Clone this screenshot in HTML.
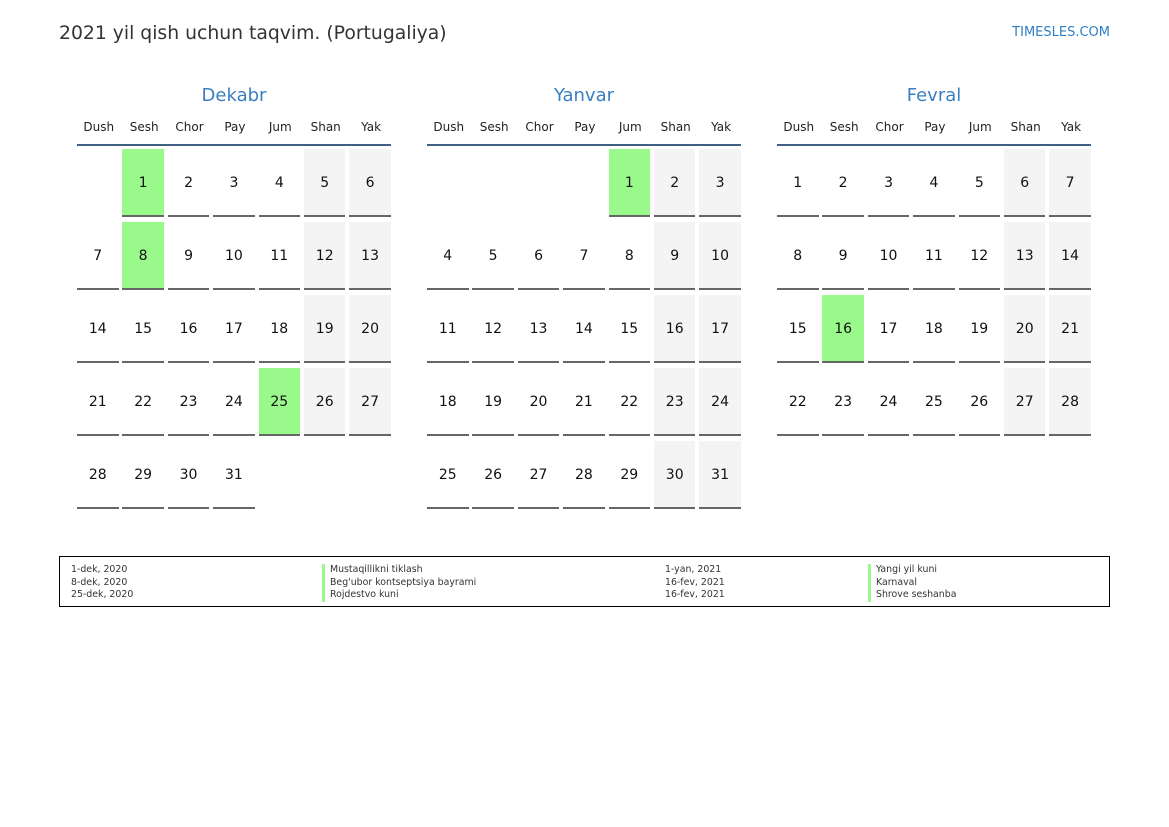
<!DOCTYPE html>
<html><head><meta charset="utf-8"><style>
body{margin:0;width:1169px;height:827px;background:#fff;font-family:"DejaVu Sans","Liberation Sans",sans-serif;position:relative;overflow:hidden}
.t{position:absolute;left:59px;top:23px;font-size:18.8px;color:#333}
.s{position:absolute;right:59px;top:25px;font-size:13px;color:#2f7fc6}
.m{position:absolute;top:85px;width:314px}
.mt{text-align:center;font-size:18px;color:#3a7fc1;height:22px;line-height:22px;margin-top:0px}
.hd{display:grid;grid-template-columns:repeat(7,41.5px);column-gap:3.9px;margin-top:11px;font-size:12px;color:#222;text-align:center;height:26px;line-height:18px;border-bottom:2px solid #3f5f85;padding:0 1px;width:312px;margin-left:0}
.g{display:grid;grid-template-columns:repeat(7,41.5px);column-gap:3.9px;row-gap:5px;margin-top:3px}
.g div{height:66px;line-height:68px;text-align:center;font-size:14px;color:#111}
.g div.c{border-bottom:2px solid #666}
.g div.w{background:#f4f4f4}
.g div.h{background:#9af98b}
.lg{position:absolute;left:59px;top:556px;width:1049px;height:49px;border:1px solid #000;font-size:9.4px;color:#333;line-height:12.5px}
.lg div{position:absolute;top:7px}
.b{border-left:3px solid #9af98b;padding-left:5px}
</style></head><body>
<div class="t">2021 yil qish uchun taqvim. (Portugaliya)</div>
<div class="s">TIMESLES.COM</div>

<div class="m" style="left:77px">
<div class="mt">Dekabr</div>
<div class="hd"><span>Dush</span><span>Sesh</span><span>Chor</span><span>Pay</span><span>Jum</span><span>Shan</span><span>Yak</span></div>
<div class="g">
<div></div><div class="c h">1</div><div class="c">2</div><div class="c">3</div><div class="c">4</div><div class="c w">5</div><div class="c w">6</div>
<div class="c">7</div><div class="c h">8</div><div class="c">9</div><div class="c">10</div><div class="c">11</div><div class="c w">12</div><div class="c w">13</div>
<div class="c">14</div><div class="c">15</div><div class="c">16</div><div class="c">17</div><div class="c">18</div><div class="c w">19</div><div class="c w">20</div>
<div class="c">21</div><div class="c">22</div><div class="c">23</div><div class="c">24</div><div class="c h">25</div><div class="c w">26</div><div class="c w">27</div>
<div class="c">28</div><div class="c">29</div><div class="c">30</div><div class="c">31</div><div></div><div></div><div></div>
</div></div>

<div class="m" style="left:427px">
<div class="mt">Yanvar</div>
<div class="hd"><span>Dush</span><span>Sesh</span><span>Chor</span><span>Pay</span><span>Jum</span><span>Shan</span><span>Yak</span></div>
<div class="g">
<div></div><div></div><div></div><div></div><div class="c h">1</div><div class="c w">2</div><div class="c w">3</div>
<div class="c">4</div><div class="c">5</div><div class="c">6</div><div class="c">7</div><div class="c">8</div><div class="c w">9</div><div class="c w">10</div>
<div class="c">11</div><div class="c">12</div><div class="c">13</div><div class="c">14</div><div class="c">15</div><div class="c w">16</div><div class="c w">17</div>
<div class="c">18</div><div class="c">19</div><div class="c">20</div><div class="c">21</div><div class="c">22</div><div class="c w">23</div><div class="c w">24</div>
<div class="c">25</div><div class="c">26</div><div class="c">27</div><div class="c">28</div><div class="c">29</div><div class="c w">30</div><div class="c w">31</div>
</div></div>

<div class="m" style="left:777px">
<div class="mt">Fevral</div>
<div class="hd"><span>Dush</span><span>Sesh</span><span>Chor</span><span>Pay</span><span>Jum</span><span>Shan</span><span>Yak</span></div>
<div class="g">
<div class="c">1</div><div class="c">2</div><div class="c">3</div><div class="c">4</div><div class="c">5</div><div class="c w">6</div><div class="c w">7</div>
<div class="c">8</div><div class="c">9</div><div class="c">10</div><div class="c">11</div><div class="c">12</div><div class="c w">13</div><div class="c w">14</div>
<div class="c">15</div><div class="c h">16</div><div class="c">17</div><div class="c">18</div><div class="c">19</div><div class="c w">20</div><div class="c w">21</div>
<div class="c">22</div><div class="c">23</div><div class="c">24</div><div class="c">25</div><div class="c">26</div><div class="c w">27</div><div class="c w">28</div>
</div></div>

<div class="lg">
<div style="left:11px">1-dek, 2020<br>8-dek, 2020<br>25-dek, 2020</div>
<div style="left:262px"><div class="b" style="position:static">Mustaqillikni tiklash</div><div class="b" style="position:static">Beg'ubor kontseptsiya bayrami</div><div class="b" style="position:static">Rojdestvo kuni</div></div>
<div style="left:605px">1-yan, 2021<br>16-fev, 2021<br>16-fev, 2021</div>
<div style="left:808px"><div class="b" style="position:static">Yangi yil kuni</div><div class="b" style="position:static">Karnaval</div><div class="b" style="position:static">Shrove seshanba</div></div>
</div>
</body></html>
